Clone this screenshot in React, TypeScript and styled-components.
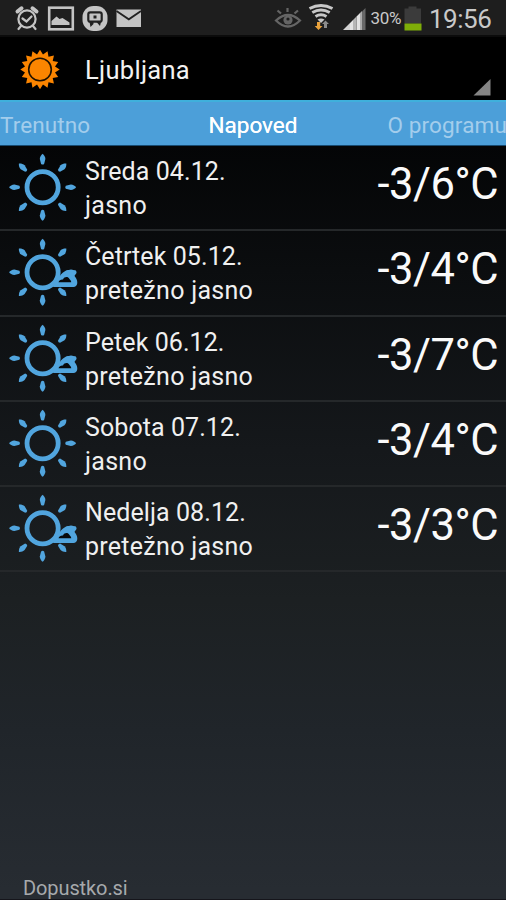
import React from "react";
import styled, { createGlobalStyle } from "styled-components";

const Global = createGlobalStyle`
  * { box-sizing: border-box; }
  html, body { margin: 0; background: #000; }
  body { font-family: Roboto, "Noto Sans", sans-serif; overflow: hidden; }
`;

const Screen = styled.div`
  width: 506px;
  height: 900px;
  display: flex;
  flex-direction: column;
  overflow: hidden;
  white-space: nowrap;
  background: linear-gradient(#000 0, #030405 130px, #0b0d0f 270px, #15181b 450px, #1c2022 600px, #20252a 730px, #272c32 890px);
  border-bottom: 1px solid #15151b;
`;

const StatusBar = styled.header`
  height: 37px;
  flex: none;
  display: flex;
  padding-right: 12px;
  background: #1e1e1e;
  border-bottom: 2px solid #0b0b0b;
  svg { display: block; flex: none; }
`;

const Percent = styled.span`
  width: 33px;
  padding-left: 0.5px;
  font-size: 17px;
  line-height: 37px;
  letter-spacing: -0.3px;
  color: #c9c9c9;
`;

const Clock = styled.span`
  width: 71px;
  padding-left: 6px;
  font-size: 26px;
  line-height: 39px;
  letter-spacing: -0.5px;
  color: #c9c9c9;
`;

const Spacer = styled.div`
  flex: 1;
`;

const ActionBar = styled.div`
  height: 63px;
  flex: none;
  display: flex;
  background: #000;
  svg { display: block; flex: none; }
`;

const Title = styled.h1`
  flex: 1;
  margin: 0;
  padding-left: 5px;
  font-size: 25.5px;
  font-weight: 400;
  line-height: 66px;
  letter-spacing: 0.3px;
  color: #f2f2f2;
`;

const Tabs = styled.nav`
  height: 46px;
  flex: none;
  display: grid;
  grid-template-columns: 1fr auto 1fr;
  background: #4c9fd9;
  border-top: 2px solid #3fb0dc;
  border-bottom: 1px solid #174a70;
`;

const Tab = styled.span<{ $active?: boolean }>`
  font-size: 22.5px;
  line-height: 46px;
  color: ${(p) => (p.$active ? "#fff" : "#a3cdec")};
  text-shadow: ${(p) => (p.$active ? "0 0 0.5px #fff" : "none")};
  &:first-child { letter-spacing: 0.1px; }
  &:last-child { text-align: right; margin-right: -1px; letter-spacing: 0.15px; }
`;

const List = styled.ul`
  margin: 0;
  padding: 0;
  list-style: none;
`;

const Row = styled.li`
  height: 85.3px;
  display: flex;
  border-bottom: 2px solid #25282a;
  svg { display: block; flex: none; }
`;

const Day = styled.div`
  flex: 1;
  padding: 9px 0 0 5px;
  font-size: 25px;
  line-height: 34px;
  color: #f0f0f0;
`;

const DayName = styled.div`
  letter-spacing: 0.08px;
`;

const Sky = styled.div`
  letter-spacing: 0.28px;
`;

const Temperature = styled.div`
  padding-right: 8px;
  font-size: 43.5px;
  line-height: 77px;
  letter-spacing: -0.5px;
  color: #fafafa;
`;

const Footer = styled.footer`
  margin-top: auto;
  padding-left: 23px;
  height: 23px;
  font-size: 20px;
  line-height: 24px;
  letter-spacing: -0.1px;
  color: #a6a9ac;
`;

const NotificationIcons = () => (
  <svg width="150" height="36" viewBox="0 0 150 36" fill="none">
    <g stroke="#c4c4c4" strokeWidth="2.2" strokeLinecap="round">
      <circle cx="27" cy="19" r="8.6" />
      <path d="M22.5 18.5l4 3 5-5M21 26l-2.5 3M33 26l2.5 3" />
      <path d="M17.5 11.5l4-3.2M36.5 11.5l-4-3.2" strokeWidth="4" />
    </g>
    <rect x="49.2" y="7.7" width="23.6" height="21.6" stroke="#c4c4c4" strokeWidth="2.6" />
    <path d="M51.5 25v-4l5-4.5 3 2.5 3-1 7 4.5V25z" fill="#c4c4c4" />
    <rect x="82.5" y="6" width="25" height="25" rx="11" fill="#c4c4c4" />
    <rect x="88.3" y="12.3" width="13.4" height="9.4" rx="2" stroke="#222" strokeWidth="2.2" />
    <path d="M93.5 15.500h3v3h-3zM89.500 22h4v2l-3 3zM96.500 22h4.500l-1 4z" fill="#222" />
    <path d="M116.5 9.5H141V27h-24.500z" fill="#c4c4c4" />
    <path d="M116.500 11l12.300 8.300L141 11" stroke="#222" strokeWidth="1.800" />
  </svg>
);

const SystemIcons = () => (
  <svg width="100" height="36" viewBox="270 0 100 36" fill="none">
    <g stroke="#656565" strokeWidth="2.2">
      <path d="M276 20.500q12-11 24 0q-12 12-24 0z" />
      <path d="M277.500 10.500l3.500 3M287.500 8v4M298 10.500l-3.500 3" />
    </g>
    <circle cx="288" cy="20" r="4.600" fill="#656565" />
    <circle cx="288" cy="19" r="1.600" fill="#1e1e1e" />
    <g stroke="#c8c8c8" strokeWidth="3">
      <path d="M309.500 8.500q11.500-6 23 0" />
      <path d="M312.300 12.500q8.700-5 17.400 0" />
      <path d="M315.500 16.500q5.500-3.400 11 0" />
    </g>
    <path d="M317.500 19.500q3.500-2.200 7 0L321 23z" fill="#c8c8c8" />
    <path d="M317 22h3.200v4h2.300l-4 4-3.800-4h2.300z" fill="#e9a23c" />
    <path d="M324 28v-4h-2l3.500-3.500L329 24h-2v4z" fill="#8c8c8c" />
    <path d="M343 30l7-7v7z" fill="#d2d2d2" />
    <path d="M350 23l3-3v10h-3zM356.500 16.500l3.500-3.500v17h-3.500z" fill="#e2e2e2" />
    <path d="M353 20l3.500-3.500V30H353z" fill="#b5b5b5" />
    <path d="M362 11.500l3.500-3.500v22H362z" fill="#686868" />
    <path d="M360 13l2-2v19h-2z" fill="#aaa" />
  </svg>
);

const Battery = () => (
  <svg width="20" height="36" viewBox="403 0 20 36">
    <path d="M404.500 8.500h4v-2h8v2h4.500v15h-16.500z" fill="#3b3b3b" />
    <path d="M404.500 23.500H421.500V30.500h-17z" fill="#7fae08" />
  </svg>
);

const burst = Array.from({ length: 32 }, (_, i) => {
  const angle = (i * Math.PI) / 16;
  const r = i % 2 ? 15.3 : 19.7;
  return `${(40 + Math.sin(angle) * r).toFixed(2)},${(32.5 - Math.cos(angle) * r).toFixed(2)}`;
}).join(" ");

const Logo = () => (
  <svg width="80" height="63" viewBox="0 0 80 63">
    <polygon points={burst} fill="#fb8500" />
    <circle cx="40" cy="32.500" r="11.300" fill="#fb8500" stroke="#1c1000" strokeWidth="1.600" />
  </svg>
);

const Corner = () => (
  <svg width="33" height="63" viewBox="473 0 33 63">
    <path d="M473.500 58.500L490.500 42v16.500z" fill="#858585" />
  </svg>
);

const WeatherIcon = ({ cloudy }: { cloudy: boolean }) => (
  <svg width="80" height="83" viewBox="0 1 80 83" fill="none">
    {[0, 45, 90, 135, 180, 225, 270, 315].map((angle) => (
      <path
        key={angle}
        d="M42.600 8.700C43.800 9.500 45.500 12 45.400 14L44.100 19Q42.600 20.200 41.100 19L39.800 14C39.700 12 41.400 9.500 42.600 8.700Z"
        fill="#51a5de"
        transform={`rotate(${angle} 42.600 42.200)`}
      />
    ))}
    <circle cx="42.600" cy="42.200" r="15.600" stroke="#51a5de" strokeWidth="4.800" />
    {cloudy && (
      <>
        <path
          d="M53 57C54.500 52.500 56 49 59.500 46.500C61.500 43.500 64 41 68 40L75.500 40.200Q78 42.500 74.700 45.300Q74.400 46.500 75.800 47.800C78.300 51.500 77.800 57 73.500 57Z"
          fill="#51a5de"
        />
        <path
          d="M58.500 52.300C59.300 50 60.800 49.300 63 49.500C64.300 46.700 68 46.200 69.300 48.800C69.800 50 71.500 50.600 71.200 52.300Z"
          fill="#080a0c"
        />
      </>
    )}
  </svg>
);

const forecast = [
  { day: "Sreda 04.12.", sky: "jasno", temp: "-3/6°C" },
  { day: "Četrtek 05.12.", sky: "pretežno jasno", temp: "-3/4°C" },
  { day: "Petek 06.12.", sky: "pretežno jasno", temp: "-3/7°C" },
  { day: "Sobota 07.12.", sky: "jasno", temp: "-3/4°C" },
  { day: "Nedelja 08.12.", sky: "pretežno jasno", temp: "-3/3°C" },
];

export default function App() {
  return (
    <>
      <Global />
      <Screen>
        <StatusBar>
          <NotificationIcons />
          <Spacer />
          <SystemIcons />
          <Percent>30%</Percent>
          <Battery />
          <Clock>19:56</Clock>
        </StatusBar>
        <ActionBar>
          <Logo />
          <Title>Ljubljana</Title>
          <Corner />
        </ActionBar>
        <Tabs>
          <Tab>Trenutno</Tab>
          <Tab $active>Napoved</Tab>
          <Tab>O programu</Tab>
        </Tabs>
        <List>
          {forecast.map((f) => (
            <Row key={f.day}>
              <WeatherIcon cloudy={f.sky !== "jasno"} />
              <Day>
                <DayName>{f.day}</DayName>
                <Sky>{f.sky}</Sky>
              </Day>
              <Temperature>{f.temp}</Temperature>
            </Row>
          ))}
        </List>
        <Footer>Dopustko.si</Footer>
      </Screen>
    </>
  );
}
